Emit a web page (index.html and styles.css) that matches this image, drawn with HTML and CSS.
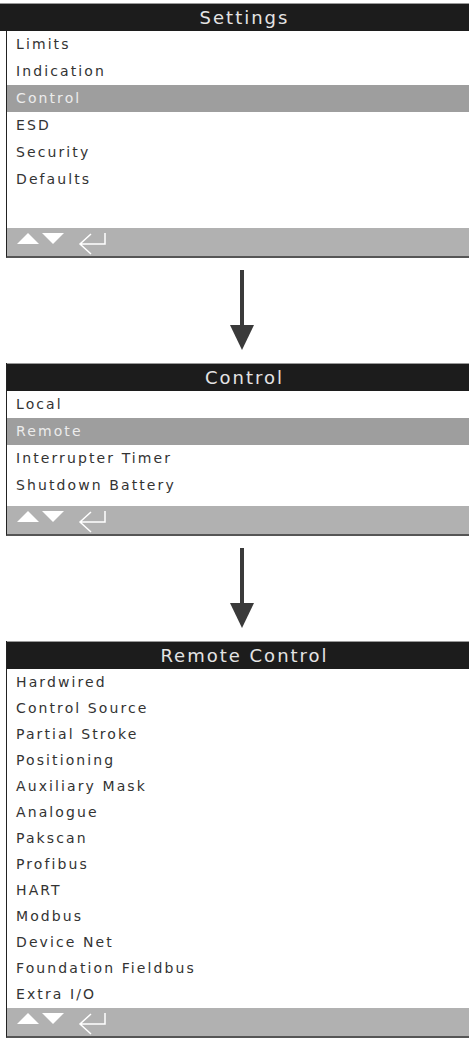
FILE: index.html
```html
<!DOCTYPE html>
<html lang="en">
<head>
    <meta charset="UTF-8">
    <title>Settings - Control - Remote Control</title>
    <link rel="stylesheet" href="styles.css">
</head>
<body>

<div class="flow">

    <!-- Settings screen -->
    <div class="screen screen-first">
        <div class="title">Settings</div>
        <ul class="menu menu-settings">
            <li>Limits</li>
            <li>Indication</li>
            <li class="selected">Control</li>
            <li>ESD</li>
            <li>Security</li>
            <li>Defaults</li>
        </ul>
        <div class="keys">
            <svg width="120" height="28" viewBox="0 0 120 28">
                <polygon points="10,16 21,5 32,16" fill="#fff"/>
                <polygon points="35,5 57,5 46,16" fill="#fff"/>
                <path d="M98 5 V16 H73 M84 6 L73 16 L84 26" stroke="#fff" stroke-width="1.5" fill="none"/>
            </svg>
        </div>
    </div>

    <div class="down-arrow">
        <svg width="24" height="80" viewBox="0 0 24 80">
            <rect x="10" y="0" width="4" height="56" fill="#3a3a3a"/>
            <polygon points="0,55 24,55 12,80" fill="#3a3a3a"/>
        </svg>
    </div>

    <!-- Control screen -->
    <div class="screen">
        <div class="title">Control</div>
        <ul class="menu menu-control">
            <li>Local</li>
            <li class="selected">Remote</li>
            <li>Interrupter Timer</li>
            <li>Shutdown Battery</li>
        </ul>
        <div class="keys">
            <svg width="120" height="28" viewBox="0 0 120 28">
                <polygon points="10,16 21,5 32,16" fill="#fff"/>
                <polygon points="35,5 57,5 46,16" fill="#fff"/>
                <path d="M98 5 V16 H73 M84 6 L73 16 L84 26" stroke="#fff" stroke-width="1.5" fill="none"/>
            </svg>
        </div>
    </div>

    <div class="down-arrow">
        <svg width="24" height="80" viewBox="0 0 24 80">
            <rect x="10" y="0" width="4" height="56" fill="#3a3a3a"/>
            <polygon points="0,55 24,55 12,80" fill="#3a3a3a"/>
        </svg>
    </div>

    <!-- Remote Control screen -->
    <div class="screen">
        <div class="title">Remote Control</div>
        <ul class="menu menu-remote">
            <li>Hardwired</li>
            <li>Control Source</li>
            <li>Partial Stroke</li>
            <li>Positioning</li>
            <li>Auxiliary Mask</li>
            <li>Analogue</li>
            <li>Pakscan</li>
            <li>Profibus</li>
            <li>HART</li>
            <li>Modbus</li>
            <li>Device Net</li>
            <li>Foundation Fieldbus</li>
            <li>Extra I/O</li>
        </ul>
        <div class="keys">
            <svg width="120" height="28" viewBox="0 0 120 28">
                <polygon points="10,16 21,5 32,16" fill="#fff"/>
                <polygon points="35,5 57,5 46,16" fill="#fff"/>
                <path d="M98 5 V16 H73 M84 6 L73 16 L84 26" stroke="#fff" stroke-width="1.5" fill="none"/>
            </svg>
        </div>
    </div>

</div>

</body>
</html>
```

FILE: styles.css
```css
html, body {
    overflow: hidden;
}
body {
    margin: 0;
    padding-top: 3px;
    background: #fff;
    font-family: "DejaVu Sans", sans-serif;
    color: #333;
}
.flow {
    margin-left: 6px;
    width: 476px;
}
.screen {
    border-left: 1px solid #222;
    border-bottom: 2px solid #555;
}
.title {
    height: 27px;
    line-height: 27px;
    border-top: 1px solid #999;
    background-color: #1c1c1c;
    color: #e4e4e4;
    font-size: 18px;
    letter-spacing: 2px;
    text-align: center;
}
.screen-first .title {
    margin-left: -7px;
    padding-left: 7px;
}
.menu {
    list-style: none;
    margin: 0;
    padding: 0;
}
.menu li {
    height: 27px;
    line-height: 27px;
    padding-left: 9px;
    font-size: 14px;
    letter-spacing: 2.1px;
    white-space: nowrap;
}
.menu li.selected {
    background-color: #9e9e9e;
    color: #ececec;
}
.menu-settings {
    height: 197px;
}
.menu-control {
    height: 115px;
}
.menu-remote {
    height: 339px;
}
.menu-remote li {
    height: 26px;
    line-height: 27px;
}
.keys {
    height: 28px;
    background-color: #b1b1b1;
}
.keys svg {
    display: block;
}
.down-arrow {
    display: flex;
    justify-content: center;
    padding-right: 4px;
    margin-top: 12px;
    margin-bottom: 13px;
}
.down-arrow svg {
    display: block;
}
```
